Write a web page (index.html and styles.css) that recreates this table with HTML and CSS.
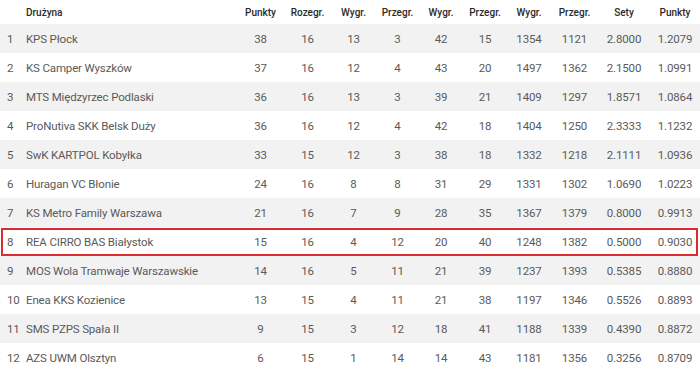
FILE: index.html
```html
<!DOCTYPE html>
<html lang="pl">
<head>
<meta charset="utf-8">
<link rel="stylesheet" href="styles.css">
</head>
<body>
<div class="table">
  <div class="row head">
    <div class="rank"></div><div class="team">Drużyna</div>
    <div>Punkty</div><div>Rozegr.</div><div>Wygr.</div><div>Przegr.</div><div>Wygr.</div><div>Przegr.</div><div>Wygr.</div><div>Przegr.</div><div>Sety</div><div>Punkty</div>
  </div>
  <div class="row odd"><div class="rank">1</div><div class="team">KPS Płock</div><div>38</div><div>16</div><div>13</div><div>3</div><div>42</div><div>15</div><div>1354</div><div>1121</div><div>2.8000</div><div>1.2079</div></div>
  <div class="row"><div class="rank">2</div><div class="team">KS Camper Wyszków</div><div>37</div><div>16</div><div>12</div><div>4</div><div>43</div><div>20</div><div>1497</div><div>1362</div><div>2.1500</div><div>1.0991</div></div>
  <div class="row odd"><div class="rank">3</div><div class="team">MTS Międzyrzec Podlaski</div><div>36</div><div>16</div><div>13</div><div>3</div><div>39</div><div>21</div><div>1409</div><div>1297</div><div>1.8571</div><div>1.0864</div></div>
  <div class="row"><div class="rank">4</div><div class="team">ProNutiva SKK Belsk Duży</div><div>36</div><div>16</div><div>12</div><div>4</div><div>42</div><div>18</div><div>1404</div><div>1250</div><div>2.3333</div><div>1.1232</div></div>
  <div class="row odd"><div class="rank">5</div><div class="team">SwK KARTPOL Kobyłka</div><div>33</div><div>15</div><div>12</div><div>3</div><div>38</div><div>18</div><div>1332</div><div>1218</div><div>2.1111</div><div>1.0936</div></div>
  <div class="row"><div class="rank">6</div><div class="team">Huragan VC Błonie</div><div>24</div><div>16</div><div>8</div><div>8</div><div>31</div><div>29</div><div>1331</div><div>1302</div><div>1.0690</div><div>1.0223</div></div>
  <div class="row odd"><div class="rank">7</div><div class="team">KS Metro Family Warszawa</div><div>21</div><div>16</div><div>7</div><div>9</div><div>28</div><div>35</div><div>1367</div><div>1379</div><div>0.8000</div><div>0.9913</div></div>
  <div class="row hl"><div class="rank">8</div><div class="team">REA CIRRO BAS Białystok</div><div>15</div><div>16</div><div>4</div><div>12</div><div>20</div><div>40</div><div>1248</div><div>1382</div><div>0.5000</div><div>0.9030</div></div>
  <div class="row odd"><div class="rank">9</div><div class="team">MOS Wola Tramwaje Warszawskie</div><div>14</div><div>16</div><div>5</div><div>11</div><div>21</div><div>39</div><div>1237</div><div>1393</div><div>0.5385</div><div>0.8880</div></div>
  <div class="row"><div class="rank">10</div><div class="team">Enea KKS Kozienice</div><div>13</div><div>15</div><div>4</div><div>11</div><div>21</div><div>38</div><div>1197</div><div>1346</div><div>0.5526</div><div>0.8893</div></div>
  <div class="row odd"><div class="rank">11</div><div class="team">SMS PZPS Spała II</div><div>9</div><div>15</div><div>3</div><div>12</div><div>18</div><div>41</div><div>1188</div><div>1339</div><div>0.4390</div><div>0.8872</div></div>
  <div class="row"><div class="rank">12</div><div class="team">AZS UWM Olsztyn</div><div>6</div><div>15</div><div>1</div><div>14</div><div>14</div><div>43</div><div>1181</div><div>1356</div><div>0.3256</div><div>0.8709</div></div>
</div>
</body>
</html>
```

FILE: styles.css
```css
html, body {
  margin: 0;
  padding: 0;
  background: #fff;
}
body {
  font-family: Roboto, "Noto Sans", sans-serif;
  color: #5a5a5a;
  font-size: 11.5px;
  letter-spacing: -0.15px;
}
.table {
  width: 700px;
}
.row {
  display: grid;
  grid-template-columns: 26px 211px 47px 47px 45px 43px 44px 44px 44px 47px 52px 50px;
  height: 29px;
  align-items: center;
  text-align: center;
  white-space: nowrap;
}
.row.odd {
  background: #f2f2f2;
}
.row.head {
  height: 24px;
  color: #2a2a2a;
  font-size: 10px;
  font-weight: 500;
  letter-spacing: 0;
}
.rank {
  text-align: left;
  padding-left: 7px;
}
.team {
  text-align: left;
}
.row.hl {
  position: relative;
}
.row.hl::after {
  content: "";
  position: absolute;
  top: 1px;
  left: 1px;
  right: 2px;
  bottom: 0;
  border: 2px solid #dc2b30;
}
```
